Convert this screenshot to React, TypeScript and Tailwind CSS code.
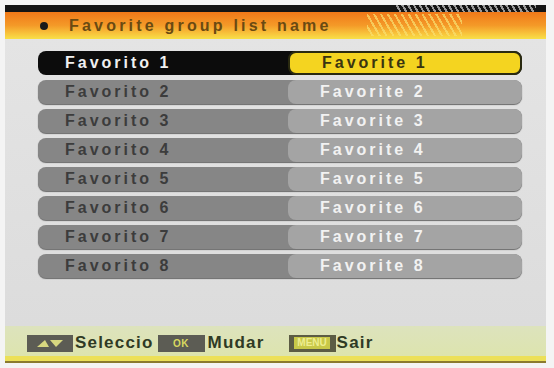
import React from "react";

const rows = [1, 2, 3, 4, 5, 6, 7, 8];

function KeyBox({ children, w }: { children: React.ReactNode; w: string }) {
  return (
    <div className={`${w} h-[17px] bg-[#5c5c54] flex items-center justify-center`}>
      {children}
    </div>
  );
}

export default function App() {
  return (
    <div
      className="w-[554px] h-[368px] bg-[#f4f4f4] overflow-hidden pt-[5px] pl-[5px]"
      style={{ fontFamily: '"Liberation Sans", Arial, sans-serif' }}
    >
      <div className="w-[541px] h-[358px] flex flex-col bg-[#dedede]">
        {/* top black line with hatch */}
        <div className="h-[7px] bg-[#141414] flex justify-end pr-[10px]">
          <div
            className="w-[140px] h-full"
            style={{
              background:
                "repeating-linear-gradient(60deg, #141414 0px, #141414 3px, #9a9a9a 3px, #9a9a9a 5px)",
            }}
          />
        </div>
        {/* header band */}
        <div className="h-[27px] bg-gradient-to-b from-[#f07818] via-[#f49a28] to-[#f8e048] flex items-center pl-[35px] relative">
          <div className="w-[8px] h-[8px] rounded-full bg-[#1a1a1a] mr-[21px]" />
          <span className="text-[16px] font-bold tracking-[3.2px] text-[#6a4a12]">
            Favorite group list name
          </span>
          <div
            className="absolute left-[362px] top-[2px] w-[95px] h-[22px] opacity-70"
            style={{
              background:
                "repeating-linear-gradient(60deg, transparent 0px, transparent 4px, #f8e070 4px, #f8e070 6px)",
            }}
          />
        </div>
        {/* list */}
        <div className="flex-1 flex flex-col gap-[5px] pt-[12px] pl-[33px] bg-gradient-to-b from-[#e4e4e4] to-[#dcdcdc]">
          {rows.map((n) => {
            const sel = n === 1;
            return (
              <div
                key={n}
                className={`w-[484px] h-[24px] rounded-[8px] flex items-center ${
                  sel ? "bg-[#0c0c0c]" : "bg-[#868686] shadow-[0_1px_1px_#6a6a6a]"
                }`}
              >
                <div
                  className={`w-[250px] pl-[27px] text-[16px] font-bold tracking-[3px] ${
                    sel ? "text-[#f0f0f0]" : "text-[#3c3c3c]"
                  }`}
                >
                  Favorito {n}
                </div>
                <div
                  className={`flex-1 h-full rounded-[8px] pl-[32px] flex items-center text-[16px] font-bold tracking-[3px] ${
                    sel
                      ? "bg-[#f4d420] border-2 border-[#2a2a10] text-[#3a3410]"
                      : "bg-[#a4a4a4] text-[#f2f2f2]"
                  }`}
                >
                  Favorite {n}
                </div>
              </div>
            );
          })}
        </div>
        {/* bottom help bar */}
        <div className="h-[30px] bg-gradient-to-b from-[#dde3bd] to-[#dde4ae] flex items-center pl-[22px] pt-[4px]">
          <KeyBox w="w-[46px]">
            <svg width="30" height="9" viewBox="0 0 30 9">
              <polygon points="2,8 10,1 14,8" fill="#d8d880" />
              <polygon points="15,1 28,1 21,8" fill="#d8d880" />
            </svg>
          </KeyBox>
          <span className="text-[17px] font-bold tracking-[1.2px] text-[#2f3a24] ml-[2px] mr-[4px]">
            Seleccio
          </span>
          <KeyBox w="w-[47px]">
            <span className="text-[10px] font-bold text-[#d8d860] tracking-[0.5px]">OK</span>
          </KeyBox>
          <span className="text-[17px] font-bold tracking-[1.2px] text-[#2f3a24] ml-[3px] mr-[24px]">
            Mudar
          </span>
          <div className="w-[47px] h-[17px] bg-[#5c5c44] flex items-center justify-center">
            <span className="bg-[#c8c848] text-[10px] font-bold text-[#eeee90] px-[3px] leading-[12px]">
              MENU
            </span>
          </div>
          <span className="text-[17px] font-bold tracking-[1.2px] text-[#2f3a24] ml-[1px]">
            Sair
          </span>
        </div>
        <div className="h-[7px] bg-[#ece058] border-b-2 border-[#8a7a30]" />
      </div>
    </div>
  );
}
